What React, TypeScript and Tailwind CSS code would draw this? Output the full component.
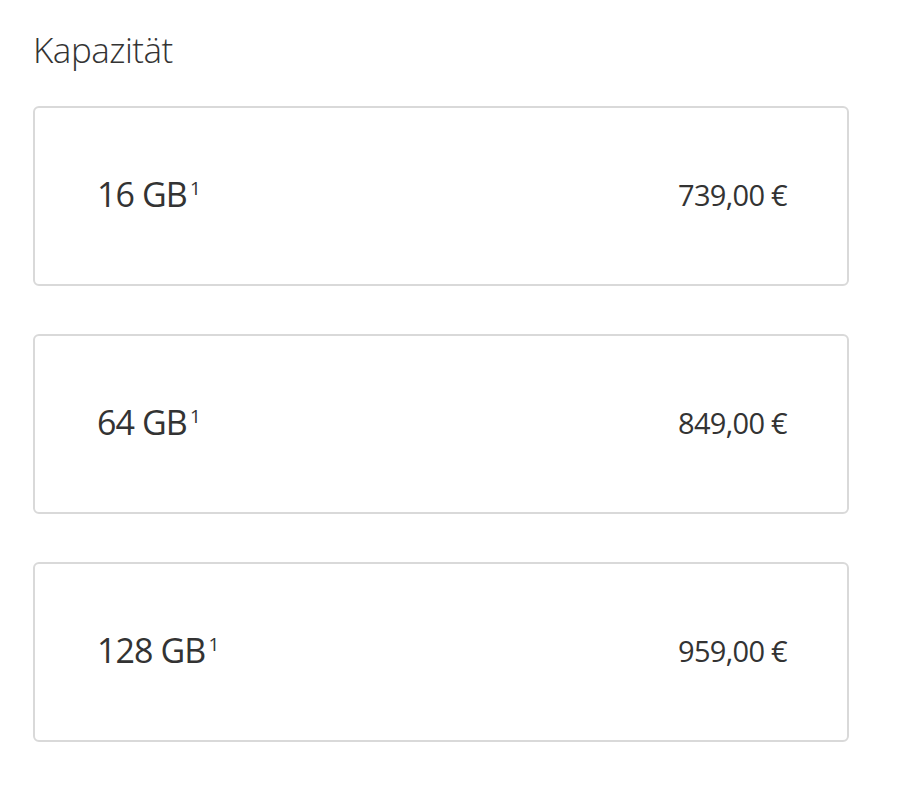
import React from "react";

const items = [
  { cap: "16 GB", price: "739,00 €" },
  { cap: "64 GB", price: "849,00 €" },
  { cap: "128 GB", price: "959,00 €" },
];

export default function App() {
  return (
    <div
      className="w-[910px] h-[790px] bg-white text-[#333333] pl-[33px] pr-[61px] pt-[28px]"
      style={{ fontFamily: '"Open Sans", "Noto Sans", sans-serif' }}
    >
      <h2 className="text-[35px] font-light leading-[44px] tracking-[-0.5px]">Kapazität</h2>
      <div className="mt-[34px] flex flex-col gap-[48px]">
        {items.map((it) => (
          <div
            key={it.cap}
            className="h-[180px] border-2 border-[#d9d9d9] rounded-[6px] flex items-center justify-between pl-[62px] pr-[60px]"
          >
            <div className="text-[34px] leading-none tracking-[-0.9px] relative -top-[2px] flex items-start">
              <span>{it.cap}</span>
              <span className="text-[19px] leading-none relative top-[2px] ml-[3px]">1</span>
            </div>
            <div className="text-[29px] leading-none tracking-[-0.7px] relative -top-[2px]">{it.price}</div>
          </div>
        ))}
      </div>
    </div>
  );
}
